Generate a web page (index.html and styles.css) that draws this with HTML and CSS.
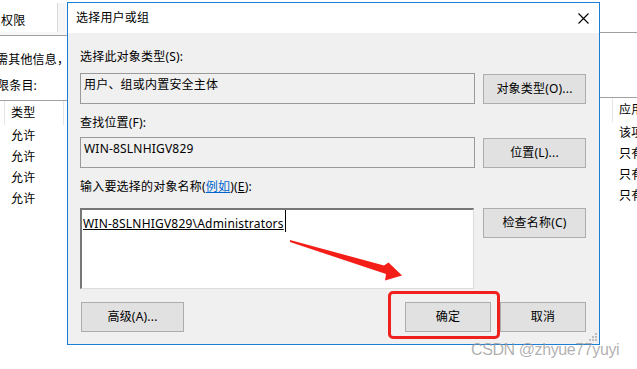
FILE: index.html
```html
<!DOCTYPE html>
<html lang="zh-CN">
<head>
    <meta charset="UTF-8">
    <title>选择用户或组</title>
    <link rel="stylesheet" href="styles.css">
</head>
<body>
    <div class="screen">
        <div class="backdrop">
            <div class="pane pane-left">
                <div class="tabs"><div class="tab">权限</div></div>
                <p class="note note-first">需其他信息，</p>
                <p class="note note-second">限条目:</p>
                <div class="list">
                    <div class="list-head"><span class="col">类型</span></div>
                    <div class="list-row">允许</div>
                    <div class="list-row">允许</div>
                    <div class="list-row">允许</div>
                    <div class="list-row">允许</div>
                </div>
            </div>
            <div class="pane pane-right">
                <div class="tabs"></div>
                <div class="list">
                    <div class="list-head"><span class="col">应用</span></div>
                    <div class="list-row">该项</div>
                    <div class="list-row">只有</div>
                    <div class="list-row">只有</div>
                    <div class="list-row">只有</div>
                </div>
            </div>
        </div>

        <div class="dialog">
            <div class="titlebar">
                <span class="title">选择用户或组</span>
                <svg class="close" width="11" height="11" viewBox="0 0 11 11">
                    <path d="M0.5 0.5 L10.5 10.5 M10.5 0.5 L0.5 10.5" stroke="#000" stroke-width="1.1" fill="none"/>
                </svg>
            </div>
            <div class="body">
                <div class="label label-1">选择此对象类型(S):</div>
                <div class="field-row">
                    <div class="box">用户、组或内置安全主体</div>
                    <button class="btn">对象类型(O)...</button>
                </div>

                <div class="label label-2">查找位置(F):</div>
                <div class="field-row">
                    <div class="box">WIN-8SLNHIGV829</div>
                    <button class="btn">位置(L)...</button>
                </div>

                <div class="label label-3">输入要选择的对象名称(<a class="link">例如</a>)(<u>E</u>):</div>
                <div class="field-row field-top">
                    <div class="names">
                        <div class="entry"><span class="resolved">WIN-8SLNHIGV829\Administrators</span><span class="caret"></span></div>
                    </div>
                    <button class="btn">检查名称(C)</button>
                </div>

                <div class="footer">
                    <button class="btn btn-adv">高级(A)...</button>
                    <button class="btn btn-small btn-ok">确定</button>
                    <button class="btn btn-small">取消</button>
                </div>
            </div>
            <svg class="grip" width="10" height="10" viewBox="0 0 10 10">
                <rect x="7" y="1" width="2" height="2" fill="#bdbdbd"/>
                <rect x="4" y="4" width="2" height="2" fill="#bdbdbd"/>
                <rect x="7" y="4" width="2" height="2" fill="#bdbdbd"/>
                <rect x="1" y="7" width="2" height="2" fill="#bdbdbd"/>
                <rect x="4" y="7" width="2" height="2" fill="#bdbdbd"/>
                <rect x="7" y="7" width="2" height="2" fill="#bdbdbd"/>
            </svg>
        </div>

        <!-- 标注 -->
        <div class="mark-box"></div>
        <svg class="arrow" width="637" height="369" viewBox="0 0 637 369">
            <polygon points="290,240 384,265.5 388.5,262.5 402,275.5 385,280.5 386,274 290,242" fill="#f41e18"/>
        </svg>
        <div class="watermark">CSDN @zhyue77yuyi</div>
    </div>
</body>
</html>
```

FILE: styles.css
```css
* {
    margin: 0;
    padding: 0;
    box-sizing: border-box;
}
body {
    background: #fff;
    font-family: "Noto Sans", "Noto Sans CJK SC", sans-serif;
    font-size: 12px;
    letter-spacing: 0.2px;
    color: #000;
}
.screen {
    width: 637px;
    height: 369px;
    position: relative;
    overflow: hidden;
}

/* 背后的权限窗口 */
.backdrop {
    display: flex;
    justify-content: space-between;
    height: 369px;
}
.pane {
    overflow: hidden;
    white-space: nowrap;
    line-height: 16px;
}
.pane-left {
    width: 67px;
}
.pane-right {
    width: 37px;
}
.tabs {
    height: 33px;
    border-bottom: 1px solid #a0a0a0;
    background: #f6f6f6;
}
.pane-right .tabs {
    background: #fff;
    margin-bottom: 64px;
}
.tab {
    width: 58px;
    height: 29px;
    margin-top: 3px;
    padding: 10px 0 0 1px;
    background: #fff;
    border-right: 1px solid #d9d9d9;
}
.note {
    margin-left: -4px;
}
.note-first {
    margin-top: 16px;
}
.note-second {
    margin-top: 10px;
    margin-left: -3px;
}
.list {
    margin-top: 6px;
    border-top: 1px solid #a0a0a0;
}
.list-head {
    height: 24px;
}
.col {
    display: inline-block;
    height: 24px;
    line-height: 24px;
    margin-left: 4px;
    padding-left: 6px;
    width: 60px;
    border-left: 1px solid #e5e5e5;
    border-right: 1px solid #e5e5e5;
}
.pane-right .col {
    margin-left: 12px;
    border-right: 0;
}
.list-row {
    height: 21px;
    line-height: 21px;
    padding-left: 11px;
}
.pane-right .list-row {
    padding-left: 19px;
}

/* 对话框 */
.dialog {
    position: absolute;
    left: 67px;
    top: 2px;
    width: 533px;
    height: 343px;
    border: 1px solid #1a7fd4;
    background: #f0f0f0;
}
.titlebar {
    height: 30px;
    background: #fff;
    display: flex;
    align-items: center;
    justify-content: space-between;
    padding: 0 10px 0 8px;
    line-height: 16px;
}
.body {
    padding: 0 13px 12px 12px;
    line-height: 16px;
}
.label-1 {
    margin-top: 16px;
    margin-bottom: 8px;
}
.label-2 {
    margin-top: 11px;
    margin-bottom: 6px;
}
.label-3 {
    margin-top: 11px;
    margin-bottom: 13px;
}
.link {
    color: #0066cc;
    text-decoration: underline;
}
.field-row {
    display: flex;
    justify-content: space-between;
    align-items: flex-end;
}
.field-top {
    align-items: flex-start;
}
.box {
    width: 395px;
    height: 31px;
    border: 1px solid #9a9a9a;
    padding: 3px 0 0 3px;
}
.names {
    width: 394px;
    height: 81px;
    background: #fff;
    border-top: 2px solid #777;
    border-left: 2px solid #777;
    border-right: 1px solid #dcdcdc;
    border-bottom: 1px solid #dcdcdc;
    padding-left: 1px;
}
.entry {
    display: flex;
    align-items: flex-end;
}
.resolved {
    text-decoration: underline;
}
.caret {
    width: 1px;
    height: 22px;
    background: #000;
    margin-left: 1px;
}
.btn {
    width: 103px;
    height: 30px;
    background: #e1e1e1;
    border: 1px solid #adadad;
    font: inherit;
    letter-spacing: inherit;
    color: #000;
    line-height: 16px;
}
.footer {
    display: flex;
    margin-top: 13px;
}
.btn-adv {
    margin-left: 1px;
}
.btn-small {
    width: 86px;
    margin-left: 9px;
}
.btn-ok {
    margin-left: auto;
}
.grip {
    position: absolute;
    right: 1px;
    bottom: 2px;
}

/* 红色标注与水印 */
.mark-box {
    position: absolute;
    left: 388px;
    top: 291px;
    width: 112px;
    height: 48px;
    border: 3px solid #f0201e;
    border-radius: 5px;
}
.arrow {
    position: absolute;
    left: 0;
    top: 0;
}
.watermark {
    position: absolute;
    left: 471px;
    top: 341px;
    font-family: "Liberation Sans", sans-serif;
    font-size: 16px;
    letter-spacing: -0.4px;
    color: rgba(150, 150, 150, 0.75);
    white-space: nowrap;
}
```
